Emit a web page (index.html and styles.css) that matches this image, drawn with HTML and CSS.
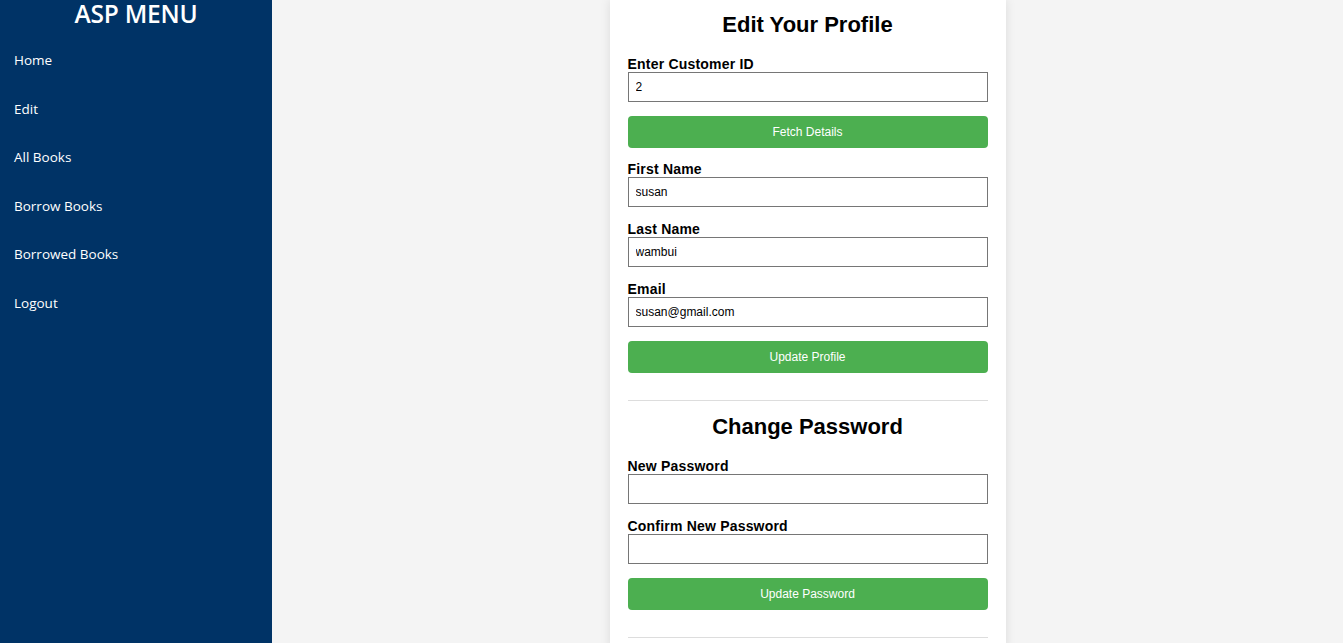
FILE: index.html
```html
<!DOCTYPE html>
<html lang="en">
<head>
<meta charset="utf-8">
<title>Edit Profile</title>
<link rel="stylesheet" href="styles.css">
</head>
<body>
<div class="layout">
  <aside class="sidebar">
    <h1 class="brand">ASP MENU</h1>
    <nav class="nav">
      <a href="#" class="nav-link">Home</a>
      <a href="#" class="nav-link">Edit</a>
      <a href="#" class="nav-link">All Books</a>
      <a href="#" class="nav-link">Borrow Books</a>
      <a href="#" class="nav-link">Borrowed Books</a>
      <a href="#" class="nav-link">Logout</a>
    </nav>
  </aside>
  <main class="main">
    <div class="card">
      <section class="section first">
        <h2 class="title">Edit Your Profile</h2>
        <div class="group">
          <label class="label">Enter Customer ID</label>
          <input class="input" type="text" value="2">
        </div>
        <button class="btn">Fetch Details</button>
        <div class="group gap-top">
          <label class="label">First Name</label>
          <input class="input" type="text" value="susan">
        </div>
        <div class="group">
          <label class="label">Last Name</label>
          <input class="input" type="text" value="wambui">
        </div>
        <div class="group">
          <label class="label">Email</label>
          <input class="input" type="text" value="susan@gmail.com">
        </div>
        <button class="btn">Update Profile</button>
      </section>
      <hr class="divider">
      <section class="section">
        <h2 class="title second">Change Password</h2>
        <div class="group">
          <label class="label">New Password</label>
          <input class="input" type="password">
        </div>
        <div class="group">
          <label class="label">Confirm New Password</label>
          <input class="input" type="password">
        </div>
        <button class="btn">Update Password</button>
      </section>
      <hr class="divider">
    </div>
  </main>
</div>
</body>
</html>
```
FILE: styles.css
```css
html, body {
  margin: 0;
  padding: 0;
  height: 100%;
}
body {
  font-family: "Liberation Sans", Arial, sans-serif;
  background: #f4f4f4;
  overflow: hidden;
}
.layout {
  display: flex;
  height: 100vh;
}
.sidebar {
  width: 272px;
  flex: none;
  background: #003366;
  color: #fff;
  font-family: "Open Sans", "Noto Sans", sans-serif;
}
.brand {
  margin: 0;
  height: 36px;
  line-height: 28px;
  text-align: center;
  font-size: 24.5px;
  font-weight: 600;
  letter-spacing: -0.2px;
}
.nav {
  display: flex;
  flex-direction: column;
}
.nav-link {
  display: block;
  color: #fff;
  text-decoration: none;
  font-size: 13.5px;
  line-height: 18.6px;
  padding: 15px 14px;
}
.main {
  flex: 1;
  display: flex;
  justify-content: center;
  background: #f4f4f4;
}
.card {
  width: 360px;
  padding: 0 18px;
  background: #fff;
  box-shadow: 0 0 10px rgba(0, 0, 0, 0.1);
  align-self: flex-start;
}
.section {
  display: flex;
  flex-direction: column;
}
.title {
  margin: 12px 0 19px;
  font-size: 22px;
  line-height: 25px;
  text-align: center;
  font-weight: bold;
  color: #000;
}
.title.second {
  margin: 0 0 19px;
}
.group {
  display: flex;
  flex-direction: column;
  margin-bottom: 14px;
}
.gap-top {
  margin-top: 13px;
}
.label {
  font-size: 14px;
  font-weight: bold;
  line-height: 16px;
  letter-spacing: 0.2px;
  color: #000;
}
.input {
  box-sizing: border-box;
  width: 100%;
  height: 30px;
  margin: 0;
  border: 1px solid #767676;
  padding: 0 7px;
  font-family: "Liberation Sans", Arial, sans-serif;
  font-size: 12px;
  color: #000;
  background: #fff;
  border-radius: 0;
}
.btn {
  height: 32px;
  width: 100%;
  border: none;
  border-radius: 4px;
  background: #4caf50;
  color: #fff;
  font-family: "Liberation Sans", Arial, sans-serif;
  font-size: 12px;
  cursor: pointer;
}
.divider {
  border: none;
  border-top: 1px solid #ddd;
  margin: 27px 0 13px;
}
```
